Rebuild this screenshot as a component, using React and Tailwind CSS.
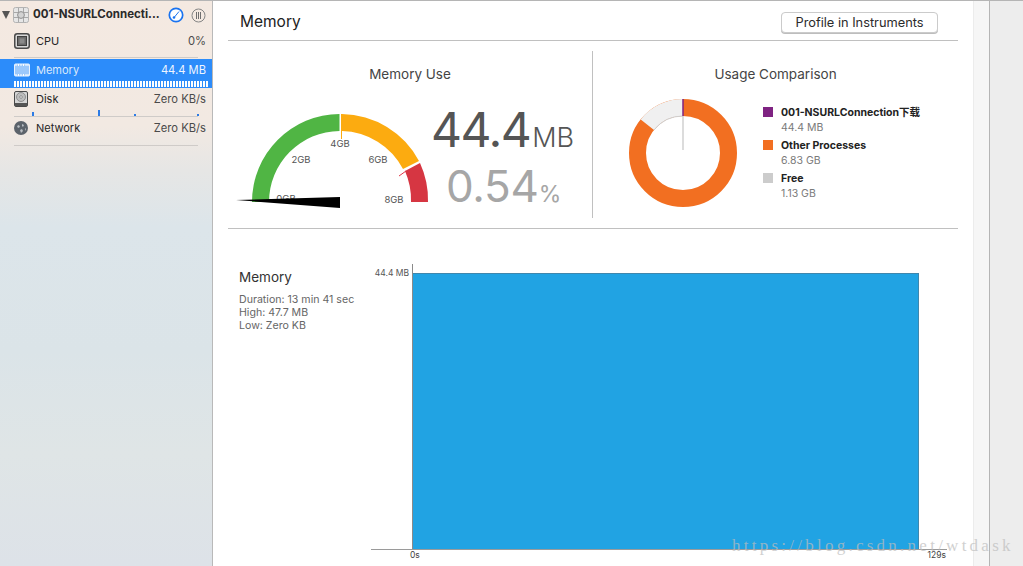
const font = { fontFamily: 'Inter, "Noto Sans CJK SC", sans-serif' };

function ChipIcon() {
  return (
    <svg width="16" height="16" viewBox="0 0 16 16">
      <rect x="0.75" y="0.75" width="14.5" height="14.5" rx="2.5" fill="#d8d8d8" stroke="#4a4a4a" strokeWidth="1.5" />
      <rect x="3.5" y="3.5" width="9" height="9" fill="#6a6a6a" stroke="#3f3f3f" />
      <rect x="5.5" y="5.5" width="5" height="5" fill="#8a8a8a" />
    </svg>
  );
}
function MemoryIcon() {
  return (
    <svg width="16" height="14" viewBox="0 0 16 14">
      <rect x="0.5" y="1" width="15" height="12" rx="1" fill="#9cc8fb" stroke="#e8f2ff" />
      <path d="M2 1v2M4.5 1v2M7 1v2M9.5 1v2M12 1v2M14 1v2M2 11v2M4.5 11v2M7 11v2M9.5 11v2M12 11v2M14 11v2" stroke="#fff" />
    </svg>
  );
}
function DiskIcon() {
  return (
    <svg width="14" height="16" viewBox="0 0 14 16">
      <rect x="0.5" y="0.5" width="13" height="15" rx="1.5" fill="#d5d5d5" stroke="#4a4a4a" />
      <rect x="1" y="12" width="12" height="3" fill="#555" />
      <circle cx="7" cy="6" r="4.5" fill="#bdbdbd" stroke="#777" strokeWidth="0.7" />
      <circle cx="7" cy="6" r="1.3" fill="#eee" stroke="#666" strokeWidth="0.6" />
    </svg>
  );
}
function GlobeIcon() {
  return (
    <svg width="14" height="14" viewBox="0 0 14 14">
      <circle cx="7" cy="7" r="7" fill="#5c636b" />
      <path d="M3 5l2-1 1 2-2 1zM8 3l2 1-1 2-1-1zM6 9l2-1 1 2-2 2zM11 7l1 1-1 2z" fill="#b9bec3" />
    </svg>
  );
}
function AppIcon() {
  return (
    <svg width="16" height="16" viewBox="0 0 16 16">
      <rect x="0.5" y="0.5" width="15" height="15" rx="2" fill="#e6e6e6" stroke="#b3b3b3" />
      <path d="M5.5 1v14M10.5 1v14M1 5.5h14M1 10.5h14" stroke="#a8a8a8" />
      <circle cx="8" cy="8" r="3.4" fill="#d2d2d2" stroke="#8f8f8f" />
    </svg>
  );
}
function GaugeIcon() {
  return (
    <svg width="16" height="16" viewBox="0 0 16 16">
      <circle cx="8" cy="8" r="6.7" fill="#fff" stroke="#1a73f0" strokeWidth="1.7" />
      <path d="M11 4.5L6.5 10" stroke="#1a73f0" strokeWidth="1" />
      <circle cx="6" cy="10.5" r="1.3" fill="#1a73f0" />
    </svg>
  );
}
function PauseIcon() {
  return (
    <svg width="15" height="15" viewBox="0 0 15 15">
      <circle cx="7.5" cy="7.5" r="6.5" fill="none" stroke="#858585" />
      <path d="M5.5 4v7M7.5 4v7M9.5 4v7" stroke="#6f6f6f" strokeWidth="1" />
    </svg>
  );
}

function Row({ icon, label, value, active, children, line, first }) {
  return (
    <div className={`relative h-[29px] shrink-0 ${active ? 'bg-[#2c8cfa]' : ''}`}>
      <div className={`flex items-center pl-[14px] pr-[6px] ${first ? 'h-[24px]' : 'h-[22px]'}`}>
        <div className="flex w-[22px] shrink-0 items-center">{icon}</div>
        <span className={`text-[11px] ${active ? 'text-[#dbe9fb]' : 'text-[#262626]'}`}>{label}</span>
        <span className={`ml-auto text-[11.2px] ${active ? 'text-[#eef5ff]' : 'text-[#4a4a4a]'}`}>{value}</span>
      </div>
      {children}
      {line && <div className="absolute bottom-0 left-[14px] h-px w-[184px] bg-[#cfcbc8]" />}
    </div>
  );
}

function Sidebar() {
  return (
    <aside className="flex h-full w-[213px] shrink-0 flex-col border-r border-[#b9b9b9] bg-[linear-gradient(180deg,#f4e9e1_0%,#f2e9e2_22%,#e6e6e5_30%,#dce5ea_40%,#dbe4e8_62%,#dfe5e6_80%,#dde2e8_100%)]">
      <div className="flex h-[28px] shrink-0 items-center pl-[2px]">
        <div className="h-0 w-0 border-x-[4.5px] border-t-[8px] border-x-transparent border-t-[#555]" />
        <div className="ml-[3px] flex w-[20px] items-center"><AppIcon /></div>
        <span className="text-[11.5px] font-bold text-[#2a2a2a]">001-NSURLConnecti...</span>
        <div className="ml-[8px] flex items-center"><GaugeIcon /></div>
        <div className="ml-[7px] flex items-center"><PauseIcon /></div>
      </div>
      <Row icon={<ChipIcon />} label="CPU" value="0%" line first />
      <div className="h-px shrink-0" />
      <Row icon={<MemoryIcon />} label="Memory" value="44.4 MB" active>
        <div className="absolute left-[14px] top-[22px] h-[6px] w-[194px] bg-[repeating-linear-gradient(90deg,#ffffff_0px,#ffffff_2px,#2c8cfa_2px,#2c8cfa_3px)]" />
      </Row>
      <Row icon={<DiskIcon />} label="Disk" value="Zero KB/s" line>
        <div className="absolute left-[32px] top-[24px] h-[4px] w-[2px] bg-[#2c7be5]" />
        <div className="absolute left-[98px] top-[22px] h-[6px] w-[2px] bg-[#2c7be5]" />
        <div className="absolute left-[134px] top-[26px] h-[2px] w-[2px] bg-[#2c7be5]" />
        <div className="absolute left-[197px] top-[26px] h-[2px] w-[2px] bg-[#2c7be5]" />
      </Row>
      <Row icon={<GlobeIcon />} label="Network" value="Zero KB/s" line />
    </aside>
  );
}

function Gauge() {
  return (
    <svg width="200" height="120" viewBox="0 0 200 120" className="shrink-0">
      {/* centre at 108,110 */}
      <path d="M20 110A88 88 0 0 1 107.5 22L107.5 39A71 71 0 0 0 37 110Z" fill="#50b544" />
      <path d="M110 22A88 88 0 0 1 187 69L171 77A71 71 0 0 0 110 39Z" fill="#fcab10" />
      <path d="M188 71A88 88 0 0 1 196 110L179 110A71 71 0 0 0 173 79Z" fill="#d63642" />
      <path d="M109.5 22V47" stroke="#fcab10" strokeWidth="1" />
      <path d="M167 84L174 79" stroke="#e0394a" strokeWidth="1" />
      <g fill="#555" fontSize="9.5" textAnchor="middle" fontFamily="Inter, sans-serif">
        <text x="108" y="55">4GB</text>
        <text x="69" y="71">2GB</text>
        <text x="146" y="71">6GB</text>
        <text x="54" y="110">0GB</text>
        <text x="162" y="111">8GB</text>
      </g>
      <path d="M4 108L108 105V116Z" fill="#000" />
    </svg>
  );
}

function Donut() {
  const cx = 55, cy = 55;
  return (
    <svg width="110" height="110" viewBox="0 0 110 110" className="shrink-0">
      <circle cx={cx} cy={cy} r="45.5" fill="none" stroke="#f26f21" strokeWidth="17" />
      <path d="M55 1A54 54 0 0 0 12.7 21.4L26 32A37 37 0 0 1 55 18Z" fill="#f0f0f0" />
      <path d="M55 18A37 37 0 0 0 26 32" fill="none" stroke="#cfcfcf" />
      <path d="M55 1V18" stroke="#7f2382" strokeWidth="1.5" />
      <path d="M55 18V52" stroke="#b9b9b9" strokeWidth="1" />
    </svg>
  );
}

function Legend({ color, name, value }) {
  return (
    <div className="flex h-[33px] items-start">
      <div className={`mt-[1px] h-[10px] w-[10px] shrink-0 ${color}`} />
      <div className="ml-[8px] flex flex-col">
        <span className="text-[10.5px] font-bold leading-[13px] text-[#222]">{name}</span>
        <span className="mt-[2px] text-[10.5px] leading-[13px] text-[#7a7a7a]">{value}</span>
      </div>
    </div>
  );
}

export default function App() {
  return (
    <div className="relative flex h-[566px] w-[1023px] overflow-hidden border-t border-[#b5b5b5] bg-white" style={font}>
      <Sidebar />
      <main className="flex h-full w-[760px] shrink-0 flex-col px-[15px]">
        <header className="flex h-[40px] shrink-0 items-center justify-between border-b border-[#c0c0c0] pl-[12px] pr-[20px] pt-[3px]">
          <h1 className="text-[15.5px] font-normal text-[#222]">Memory</h1>
          <button className="h-[21px] w-[157px] rounded-[4px] border border-[#cbcbcb] bg-white text-[12.8px] text-[#2b2b2b] shadow-[0_1px_0_#bdbdbd]">Profile in Instruments</button>
        </header>

        <section className="flex h-[188px] shrink-0 border-b border-[#c0c0c0] py-[10px]">
          <div className="flex w-[365px] shrink-0 flex-col border-r border-[#c0c0c0]">
            <h2 className="mt-[13px] text-center text-[13.5px] font-normal leading-[20px] text-[#444]">Memory Use</h2>
            <div className="mt-[8px] flex pl-[4px]">
              <Gauge />
              <div className="flex flex-col items-start pt-[13px]">
                <div className="ml-[-1px] flex items-baseline text-[#555]">
                  <span className="text-[48px] font-normal leading-[50px] tracking-[-1.5px]">44.4</span>
                  <span className="ml-[2px] text-[27px] font-light leading-[50px]">MB</span>
                </div>
                <div className="mt-[-2px] flex items-baseline pl-[14px] text-[#a6a6a6]">
                  <span className="text-[44px] font-normal leading-[50px] tracking-[-0.3px]">0.54</span>
                  <span className="text-[23px] font-normal leading-[50px]">%</span>
                </div>
              </div>
            </div>
          </div>
          <div className="flex flex-1 flex-col">
            <h2 className="mt-[13px] text-center text-[13.5px] font-normal leading-[20px] text-[#444]">Usage Comparison</h2>
            <div className="mt-[14px] flex pl-[35px]">
              <Donut />
              <div className="ml-[25px] flex flex-col pt-[8px]">
                <Legend color="bg-[#7f2382]" name="001-NSURLConnection下载" value="44.4 MB" />
                <Legend color="bg-[#f26f21]" name="Other Processes" value="6.83 GB" />
                <Legend color="bg-[#cccccc]" name="Free" value="1.13 GB" />
              </div>
            </div>
          </div>
        </section>

        <section className="flex min-h-0 flex-1">
          <div className="w-[143px] shrink-0 pl-[11px] pt-[40px]">
            <h3 className="text-[13.5px] font-normal leading-[16px] text-[#333]">Memory</h3>
            <div className="mt-[8px] text-[10.6px] leading-[13px] text-[#666]">
              <p>Duration: 13 min 41 sec</p>
              <p>High: 47.7 MB</p>
              <p>Low: Zero KB</p>
            </div>
          </div>
          <div className="flex w-[576px] shrink-0 flex-col pt-[35px]">
            <div className="flex h-[286px] border-b border-[#9a9a9a]">
              <div className="w-[41px] shrink-0 pr-[3px] pt-[4px] text-right text-[8.5px] leading-[10px] text-[#555]">44.4 MB</div>
              <div className="flex w-[507px] flex-col border-l border-[#8a8a8a] pt-[9px]">
                <div className="flex-1 border-r border-t border-[#3f87ad] bg-[#21a3e3]" />
              </div>
            </div>
            <div className="flex justify-between pl-[39px] pr-[1px] pt-[1px] text-[8.5px] leading-[8px] text-[#444]">
              <span>0s</span>
              <span>129s</span>
            </div>
          </div>
        </section>
      </main>
      <div className="h-full w-[16px] shrink-0 border-l border-[#ececec] bg-[#f6f6f6]" />
      <div className="h-full flex-1 border-l border-[#b5b5b5] bg-[#ededed]" />
      <div className="absolute left-[732px] top-[535px] text-[17px] leading-[20px] tracking-[3.25px] text-[#bdbdbd] opacity-70" style={{ fontFamily: '"Liberation Serif", serif' }}>https://blog.csdn.net/wtdask</div>
    </div>
  );
}
